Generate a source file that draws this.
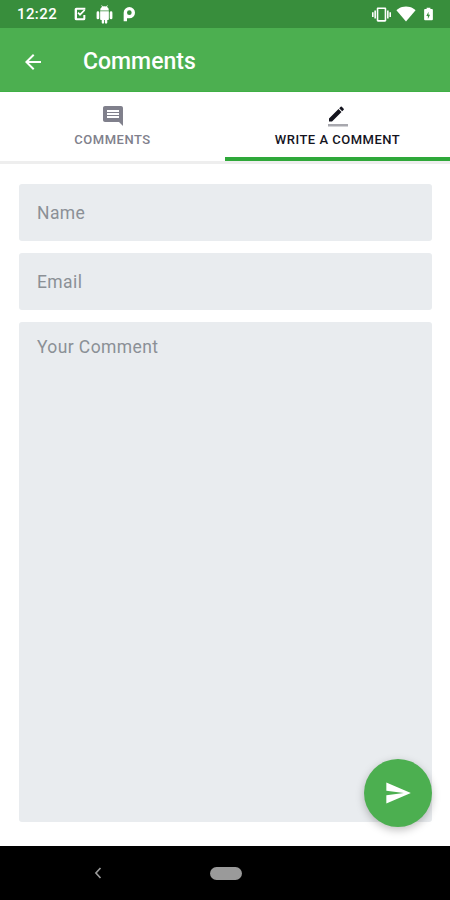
<template>
  <div class="screen">
    <div class="status">
      <span class="time">12:22</span>
      <div class="status-left">
        <svg viewBox="0 0 24 24" width="16" height="16">
          <path d="M4 5a2.500 2.500 0 0 1 2.500-2.500H20v3H7.500v13H17v-5h3v5.500a2.500 2.500 0 0 1-2.500 2.500h-11A2.500 2.500 0 0 1 4 19z" fill="#fff" />
          <path d="M9 10l3 3 7-7" fill="none" stroke="#fff" stroke-width="2.600" />
        </svg>
        <svg viewBox="0 0 24 24" width="19" height="19">
          <path fill="#fff" d="M6.500 18a1 1 0 0 0 1 1h1v3a1.500 1.500 0 0 0 3 0v-3h1v3a1.500 1.500 0 0 0 3 0v-3h1a1 1 0 0 0 1-1V8h-11zM3.700 8A1.700 1.700 0 0 0 2 9.700v6.600a1.700 1.700 0 0 0 3.400 0V9.700A1.700 1.700 0 0 0 3.700 8zm16.600 0a1.700 1.700 0 0 0-1.700 1.700v6.600a1.700 1.700 0 0 0 3.400 0V9.700A1.700 1.700 0 0 0 20.300 8zM15 2.300l1.300-1.300-.7-.6-1.500 1.500A5.500 5.500 0 0 0 12 1.500c-.7 0-1.300.1-1.900.4L8.500.4l-.7.6 1.300 1.300A5 5 0 0 0 6.500 7h11A5 5 0 0 0 15 2.300z" />
        </svg>
        <svg viewBox="0 0 24 24" width="16" height="16">
          <path fill="#fff" fill-rule="evenodd" d="M4 10a8.500 8.500 0 1 1 8.500 8.500H9V23H4zm5 0a3.500 3.500 0 1 0 3.500-3.500A3.500 3.500 0 0 0 9 10z" />
        </svg>
      </div>
      <div class="status-right">
        <svg viewBox="0 0 24 24" width="19" height="19">
          <path fill="#fff" d="M0 15h2V9H0zm3 2h2V7H3zm19-8v6h2V9zm-3 8h2V7h-2zM16.500 3h-9C6.670 3 6 3.670 6 4.500v15c0 .83.67 1.500 1.500 1.500h9c.83 0 1.500-.67 1.500-1.500v-15c0-.83-.67-1.500-1.500-1.500zM16 19H8V5h8z" />
        </svg>
        <svg viewBox="0 0 24 24" width="20" height="20">
          <path fill="#fff" d="M12 21 .5 7.500C.9 7.100 5 3 12 3s11.100 4.100 11.500 4.500z" />
        </svg>
        <svg viewBox="0 0 24 24" width="15" height="18">
          <path fill="#fff" fill-rule="evenodd" d="M9 2h6v2h2.500A1.500 1.500 0 0 1 19 5.500v15a1.500 1.500 0 0 1-1.500 1.500h-11A1.500 1.500 0 0 1 5 20.500v-15A1.500 1.500 0 0 1 6.500 4H9zm2 18 3.500-7H12V8.500L8.500 15H11z" />
        </svg>
      </div>
    </div>

    <header class="appbar">
      <svg viewBox="0 0 24 24" width="24" height="24">
        <path fill="#fff" d="M20 11H7.830l5.590-5.590L12 4l-8 8 8 8 1.410-1.410L7.830 13H20z" />
      </svg>
      <h1>Comments</h1>
    </header>

    <nav class="tabs">
      <div class="tab">
        <svg viewBox="0 0 24 24" width="24" height="24">
          <path fill="#80808c" d="M21.990 4c0-1.100-.89-2-1.990-2H4c-1.100 0-2 .9-2 2v12c0 1.100.9 2 2 2h14l4 4zM18 14H6v-2h12zm0-3H6V9h12zm0-3H6V6h12z" />
        </svg>
        <span>COMMENTS</span>
      </div>
      <div class="tab active">
        <svg viewBox="0 0 24 24" width="26" height="26">
          <path fill="#14141e" d="M3 14.500V17.500h3L15.500 8l-3-3zM17.700 5.800a.8.800 0 0 0 0-1.100l-1.900-1.900a.8.800 0 0 0-1.100 0L13.200 4.300l3 3z" />
          <rect x="2" y="20" width="20" height="2.500" fill="#a8a8ae" />
        </svg>
        <span>WRITE A COMMENT</span>
      </div>
    </nav>

    <main class="form">
      <div class="field">Name</div>
      <div class="field">Email</div>
      <div class="field area">Your Comment</div>
      <button class="fab">
        <svg viewBox="0 0 24 24" width="28" height="28">
          <path fill="#fff" d="M2.010 21 23 12 2.010 3 2 10l15 2-15 2z" />
        </svg>
      </button>
    </main>

    <footer class="navbar">
      <svg viewBox="0 0 12 16" width="10" height="14">
        <path d="M9 2 3.500 8 9 14" fill="none" stroke="#9a9a9a" stroke-width="2" />
      </svg>
      <div class="pill"></div>
    </footer>
  </div>
</template>

<style>
body {
  margin: 0;
  background: #fff;
}
</style>

<style scoped>
.screen {
  width: 450px;
  height: 900px;
  display: flex;
  flex-direction: column;
  font-family: Roboto, "Liberation Sans", sans-serif;
  background: #fff;
  overflow: hidden;
}
.status {
  height: 28px;
  background: #388e3c;
  color: #fff;
  display: flex;
  align-items: center;
  padding: 0 14px 0 17px;
  font-size: 15px;
  font-weight: 500;
  letter-spacing: 0.4px;
}
.time {
  width: 55px;
}
.status-left {
  display: flex;
  align-items: center;
  gap: 7px;
}
.status-right {
  margin-left: auto;
  display: flex;
  align-items: center;
  gap: 5px;
}
.appbar {
  height: 64px;
  box-sizing: border-box;
  background: #4caf50;
  display: flex;
  align-items: center;
  padding: 4px 0 0 21px;
  border-bottom: 1px solid #3fb045;
}
.appbar h1 {
  margin: 0 0 0 38px;
  color: #fff;
  font-size: 23px;
  font-weight: 500;
}
.tabs {
  height: 69px;
  display: flex;
  border-bottom: 3px solid #eeeeee;
}
.tab {
  flex: 1;
  height: 69px;
  box-sizing: border-box;
  display: flex;
  flex-direction: column;
  align-items: center;
  padding-top: 12px;
  font-size: 13px;
  font-weight: 500;
  color: #80808c;
  letter-spacing: 0.5px;
}
.tab svg {
  height: 24px;
}
.tab span {
  margin-top: 4px;
}
.tab.active {
  color: #14141e;
  border-bottom: 4px solid #2fa83a;
}
.form {
  position: relative;
  flex: 1;
  display: flex;
  flex-direction: column;
  gap: 12px;
  padding: 20px 18px 24px 19px;
}
.field {
  height: 57px;
  flex-shrink: 0;
  box-sizing: border-box;
  background: #e9ecef;
  border-radius: 3px;
  padding: 0 18px;
  display: flex;
  align-items: center;
  color: #8b9096;
  font-size: 17.500px;
  letter-spacing: 0.4px;
}
.area {
  flex: 1;
  align-items: flex-start;
  padding-top: 15px;
}
.fab {
  position: absolute;
  right: 18px;
  bottom: 19px;
  width: 68px;
  height: 68px;
  padding: 0;
  border: none;
  border-radius: 50%;
  background: #4caf50;
  box-shadow: 0 3px 8px rgba(0, 0, 0, 0.25);
  display: flex;
  align-items: center;
  justify-content: center;
}
.navbar {
  height: 54px;
  background: #000;
  display: flex;
  align-items: center;
  padding-left: 93px;
}
.pill {
  width: 32px;
  height: 13px;
  margin-left: 107px;
  border-radius: 7px;
  background: #9a9a9a;
}
</style>
